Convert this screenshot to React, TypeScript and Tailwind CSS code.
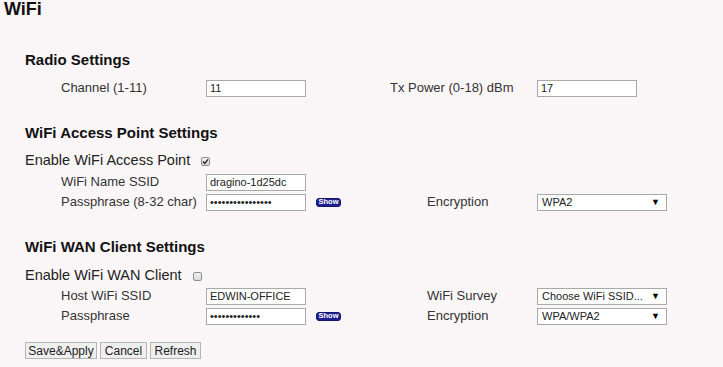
import React from "react";

const font = { fontFamily: '"Liberation Sans", Arial, sans-serif' };

function TextBox({ value, password }: { value: string; password?: boolean }) {
  return (
    <input
      readOnly
      type={password ? "password" : "text"}
      defaultValue={value}
      className="w-[100px] h-[17px] bg-white border border-[#a9a9a9] px-[3px] text-[11px] text-[#222] outline-none"
      style={font}
    />
  );
}

function SelectBox({ value }: { value: string }) {
  return (
    <div className="w-[130px] h-[17px] bg-white border border-[#a9a9a9] flex items-center justify-between pl-[4px] pr-[6px] text-[11px] text-[#222]">
      <span>{value}</span>
      <span className="text-[9px] leading-none text-black">▼</span>
    </div>
  );
}

function ShowBtn() {
  return (
    <div className="w-[25px] h-[9px] rounded-[3px] bg-[#1f1f8f] border border-[#14146a] flex items-center justify-center text-white text-[7.5px] font-bold leading-none">
      Show
    </div>
  );
}

function CheckBox({ checked }: { checked?: boolean }) {
  return (
    <span className="ml-[11px] w-[9px] h-[9px] rounded-[2px] border border-[#8f8f8f] bg-gradient-to-b from-[#f2f2f2] to-[#d8d8d8] flex items-center justify-center">
      {checked && (
        <svg width="7" height="7" viewBox="0 0 7 7">
          <path d="M1 3.6 L2.8 5.4 L6 1.4" stroke="#222" strokeWidth="1.4" fill="none" />
        </svg>
      )}
    </span>
  );
}

function Heading({ children, className = "" }: { children: React.ReactNode; className?: string }) {
  return (
    <div className={`pl-[25px] h-[20px] leading-[20px] text-[15px] font-bold text-[#111] ${className}`}>{children}</div>
  );
}

function Label({ children }: { children: React.ReactNode }) {
  return <span className="pl-[61px] w-[206px] shrink-0 text-[13px] text-[#333]">{children}</span>;
}

function RightLabel({ children }: { children: React.ReactNode }) {
  return <span className="w-[110px] shrink-0 text-[13px] text-[#333]">{children}</span>;
}

function EnableRow({ label, checked, className = "" }: { label: string; checked?: boolean; className?: string }) {
  return (
    <div className={`h-[20px] flex items-center pl-[25px] ${className}`}>
      <span className="text-[14.5px] text-[#222]">{label}</span>
      <CheckBox checked={checked} />
    </div>
  );
}

export default function App() {
  return (
    <div className="w-[723px] h-[367px] bg-[#faf6f7] overflow-hidden" style={font}>
      <div className="pl-[4px] h-[18px] leading-[18px] text-[18px] font-bold text-[#111]">WiFi</div>

      <Heading className="mt-[32px]">Radio Settings</Heading>
      <div className="mt-[8px] h-[20px] flex items-center">
        <Label>Channel (1-11)</Label>
        <TextBox value="11" />
        <span className="ml-[84px] w-[147px] shrink-0 text-[13px] text-[#333]">Tx Power (0-18) dBm</span>
        <TextBox value="17" />
      </div>

      <Heading className="mt-[25px]">WiFi Access Point Settings</Heading>
      <EnableRow label="Enable WiFi Access Point" checked className="mt-[8px]" />
      <div className="mt-[1px] h-[20px] flex items-center">
        <Label>WiFi Name SSID</Label>
        <TextBox value="dragino-1d25dc" />
      </div>
      <div className="h-[20px] flex items-center">
        <Label>Passphrase (8-32 char)</Label>
        <TextBox value="dragino-dragino+" password />
        <div className="w-[121px] shrink-0 pl-[10px] flex items-center">
          <ShowBtn />
        </div>
        <RightLabel>Encryption</RightLabel>
        <SelectBox value="WPA2" />
      </div>

      <Heading className="mt-[25px]">WiFi WAN Client Settings</Heading>
      <EnableRow label="Enable WiFi WAN Client" className="mt-[9px]" />
      <div className="h-[20px] flex items-center">
        <Label>Host WiFi SSID</Label>
        <TextBox value="EDWIN-OFFICE" />
        <div className="w-[121px] shrink-0" />
        <RightLabel>WiFi Survey</RightLabel>
        <SelectBox value="Choose WiFi SSID..." />
      </div>
      <div className="h-[20px] flex items-center">
        <Label>Passphrase</Label>
        <TextBox value="edwinoffice12" password />
        <div className="w-[121px] shrink-0 pl-[10px] flex items-center">
          <ShowBtn />
        </div>
        <RightLabel>Encryption</RightLabel>
        <SelectBox value="WPA/WPA2" />
      </div>

      <div className="mt-[16px] pl-[25px] flex gap-[3px]">
        <button className="w-[72px] h-[17px] bg-[#efefef] border border-[#b5b5b5] text-[12px] text-[#222] leading-none">Save&amp;Apply</button>
        <button className="w-[47px] h-[17px] bg-[#efefef] border border-[#b5b5b5] text-[12px] text-[#222] leading-none">Cancel</button>
        <button className="w-[51px] h-[17px] bg-[#efefef] border border-[#b5b5b5] text-[12px] text-[#222] leading-none">Refresh</button>
      </div>
    </div>
  );
}
